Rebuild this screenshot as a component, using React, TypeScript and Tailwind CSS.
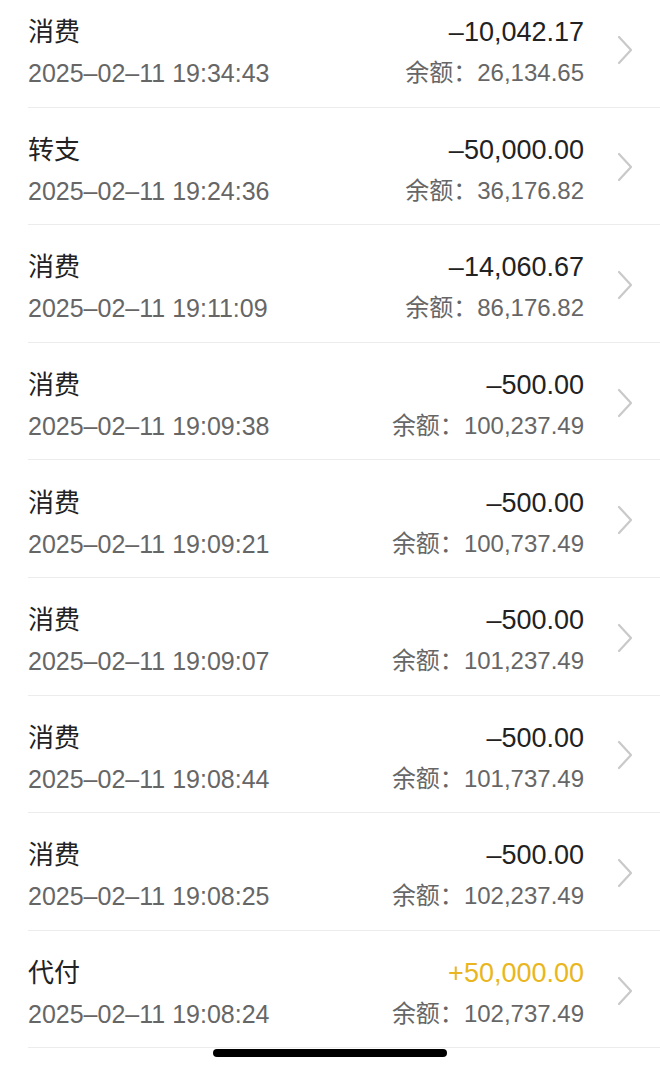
const rows = [
  { title: "消费", time: "2025–02–11 19:34:43", amount: "–10,042.17", balance: "26,134.65" },
  { title: "转支", time: "2025–02–11 19:24:36", amount: "–50,000.00", balance: "36,176.82" },
  { title: "消费", time: "2025–02–11 19:11:09", amount: "–14,060.67", balance: "86,176.82" },
  { title: "消费", time: "2025–02–11 19:09:38", amount: "–500.00", balance: "100,237.49" },
  { title: "消费", time: "2025–02–11 19:09:21", amount: "–500.00", balance: "100,737.49" },
  { title: "消费", time: "2025–02–11 19:09:07", amount: "–500.00", balance: "101,237.49" },
  { title: "消费", time: "2025–02–11 19:08:44", amount: "–500.00", balance: "101,737.49" },
  { title: "消费", time: "2025–02–11 19:08:25", amount: "–500.00", balance: "102,237.49" },
  { title: "代付", time: "2025–02–11 19:08:24", amount: "+50,000.00", balance: "102,737.49", income: true },
];

function Chevron() {
  return (
    <svg width="18" height="30" viewBox="0 0 18 30" className="shrink-0">
      <polyline points="3,2 15,15 3,28" fill="none" stroke="#c9c9c9" strokeWidth="2.2" strokeLinecap="round" strokeLinejoin="round" />
    </svg>
  );
}

export default function App() {
  return (
    <div
      className="w-[660px] h-[1072px] overflow-hidden bg-white"
      style={{ fontFamily: '"Liberation Sans", "Noto Sans CJK SC", sans-serif' }}
    >
      <div className="-mt-[10px]">
        {rows.map((r, i) => (
          <div key={i} className="ml-[28px] h-[117.6px] border-b border-[#ececec] flex items-center pr-[26px]">
            <div className="flex-1 flex flex-col pt-[9px]">
              <span className="text-[26px] leading-[36px] text-[#222]">{r.title}</span>
              <span className="text-[25px] leading-[36px] mt-[5px] text-[#666]">{r.time}</span>
            </div>
            <div className="flex flex-col items-end pt-[9px]">
              <span className={`text-[27px] leading-[36px] ${r.income ? "text-[#e9b620]" : "text-[#222]"}`}>{r.amount}</span>
              <span className="text-[24px] leading-[36px] mt-[5px] text-[#666]">余额：{r.balance}</span>
            </div>
            <div className="ml-[32px] flex items-center pt-[3px]">
              <Chevron />
            </div>
          </div>
        ))}
      </div>
      <div className="mt-[1px] mx-auto w-[234px] h-[8px] rounded-full bg-black" />
    </div>
  );
}
